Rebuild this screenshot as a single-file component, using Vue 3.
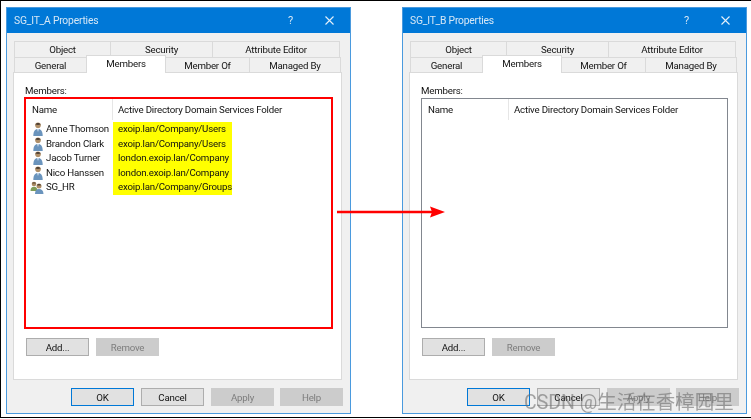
<template>
  <div class="shot">
    <section v-for="win in windows" :key="win.title" class="dialog">
      <header class="titlebar">
        <span class="title">{{ win.title }}</span>
        <span class="help">?</span>
        <svg class="close" width="9" height="9" viewBox="0 0 9 9">
          <path d="M.5 .5l8 8M8.500 .5l-8 8" stroke="#e4f0fa" stroke-width="1.100" fill="none" />
        </svg>
      </header>

      <div class="content">
        <div class="tabrow top">
          <span v-for="t in topTabs" :key="t" class="tab">{{ t }}</span>
        </div>
        <div class="tabrow bottom">
          <span v-for="t in bottomTabs" :key="t" :class="['tab', { active: t === 'Members' }]">{{ t }}</span>
        </div>

        <div class="panel">
          <div class="members-label">Members:</div>
          <div :class="['list', { flagged: win.members.length }]">
            <div class="list-head">
              <span class="col-name">Name</span>
              <span class="col-folder">Active Directory Domain Services Folder</span>
            </div>
            <div v-for="m in win.members" :key="m.name" class="row">
              <span class="cell-name">
                <svg v-if="m.group" class="icon multi" width="14" height="13" viewBox="0 0 14 13">
                  <circle cx="4" cy="3" r="2.300" fill="#a98a62" />
                  <path d="M2 2.200c.8-1.400 3.200-1.400 4 0-1.300.4-2.700.4-4 0z" fill="#5a4a38" />
                  <path d="M.5 10c0-3 1.300-4.300 3.500-4.300S7.500 7 7.500 10z" fill="#7f9d58" />
                  <circle cx="9" cy="5" r="2.500" fill="#b08f68" />
                  <path d="M6.800 4.200c.9-1.500 3.500-1.500 4.400 0-1.400.4-3 .4-4.400 0z" fill="#4f4034" />
                  <path d="M5 13c0-3.400 1.500-5 4-5s4.500 1.600 4.500 5z" fill="#6a94bd" />
                </svg>
                <svg v-else class="icon" width="10" height="14" viewBox="0 0 10 14">
                  <circle cx="5" cy="3.200" r="2.800" fill="#b08f68" />
                  <path d="M2.300 2.500C3 .4 7 .4 7.700 2.500 6 3 4 3 2.300 2.500z" fill="#4f4034" />
                  <path d="M.3 14c0-4.400 1.600-7 4.700-7s4.700 2.600 4.700 7z" fill="#6a94bd" />
                  <path d="M4 6.800h2L5 10z" fill="#dce6ef" />
                </svg>
                {{ m.name }}
              </span>
              <span class="cell-folder">{{ m.folder }}</span>
            </div>
          </div>
          <div class="list-actions">
            <button class="btn">Add...</button>
            <button class="btn off">Remove</button>
          </div>
        </div>

        <div class="footer">
          <button class="btn primary">OK</button>
          <button class="btn">Cancel</button>
          <button class="btn off">Apply</button>
          <button class="btn off">Help</button>
        </div>
      </div>
    </section>

    <svg class="arrow" width="109" height="14" viewBox="0 0 109 14">
      <path d="M0 7h95" stroke="#f00" stroke-width="2.600" />
      <path d="M93 1.500l15 5.500-15 5.500 2-5.500z" fill="#f00" />
    </svg>
    <div class="watermark">CSDN @生活在香樟园里</div>
  </div>
</template>

<script setup>
const topTabs = ['Object', 'Security', 'Attribute Editor']
const bottomTabs = ['General', 'Members', 'Member Of', 'Managed By']

const windows = [
  {
    title: 'SG_IT_A Properties',
    members: [
      { name: 'Anne Thomson', folder: 'exoip.lan/Company/Users' },
      { name: 'Brandon Clark', folder: 'exoip.lan/Company/Users' },
      { name: 'Jacob Turner', folder: 'london.exoip.lan/Company' },
      { name: 'Nico Hanssen', folder: 'london.exoip.lan/Company' },
      { name: 'SG_HR', folder: 'exoip.lan/Company/Groups', group: true }
    ]
  },
  { title: 'SG_IT_B Properties', members: [] }
]
</script>

<style>
html, body { background: #fff; }
</style>

<style scoped>
.shot {
  position: relative;
  width: 751px;
  height: 418px;
  box-sizing: border-box;
  overflow: hidden;
  border-top: 1px solid #000;
  border-left: 1px solid #000;
  border-bottom: 1px solid #000;
  padding: 6px 4px 3px 5px;
  display: flex;
  justify-content: space-between;
  font-family: Roboto, "Noto Sans CJK SC", sans-serif;
  font-size: 9.7px;
  letter-spacing: -.2px;
  color: #111;
  background: #fff;
  filter: blur(.4px);
}

.dialog {
  width: 345px;
  box-sizing: border-box;
  border: 1px solid #4a9ade;
  display: flex;
  flex-direction: column;
  background: #f0f0f0;
}

.titlebar {
  height: 25px;
  flex: none;
  background: #0078d7;
  color: #d5e7f6;
  display: flex;
  align-items: center;
  padding: 0 16px 0 7px;
  font-size: 10.300px;
}
.title { flex: 1; }
.help { margin-right: 32px; font-size: 11px; }

.content {
  flex: 1;
  padding: 8px 8px 7px 6px;
  display: flex;
  flex-direction: column;
}

.tabrow { display: flex; height: 16px; flex: none; }
.tabrow.bottom { height: 15px; position: relative; z-index: 1; margin-bottom: -1px; }

.tab {
  box-sizing: border-box;
  border: 1px solid #dadada;
  border-bottom: 0;
  border-right-width: 0;
  background: #f0f0f0;
  display: flex;
  align-items: center;
  justify-content: center;
}
.tab:last-child { border-right-width: 1px; }
.top .tab:nth-child(1) { width: 96px; margin-left: 1px; }
.top .tab:nth-child(2) { width: 102px; }
.top .tab:nth-child(3) { width: 128px; }
.bottom .tab:nth-child(1) { width: 72px; margin-left: 1px; }
.bottom .tab:nth-child(2) { width: 80px; }
.bottom .tab:nth-child(3) { width: 84px; }
.bottom .tab:nth-child(4) { width: 92px; }
.tab.active {
  background: #fff;
  height: 18px;
  margin-top: -2px;
  padding-bottom: 3px;
  border-right-width: 1px;
  margin-right: -1px;
  position: relative;
}

.panel {
  flex: 1;
  box-sizing: border-box;
  background: #fff;
  border: 1px solid #dadada;
  margin-top: 1px;
  padding: 11px 9px 0 11px;
  display: flex;
  flex-direction: column;
}

.members-label { height: 14px; line-height: 13px; }

.list {
  flex: 1;
  box-sizing: border-box;
  border: 1px solid #82878f;
}
.list.flagged {
  outline: 2.500px solid #f00;
  outline-offset: -1.500px;
}

.list-head {
  height: 21px;
  display: flex;
  align-items: center;
  margin-bottom: 2px;
}
.col-name {
  width: 87px;
  height: 21px;
  line-height: 21px;
  box-sizing: border-box;
  padding-left: 6px;
  border-right: 1px solid #e6e6e6;
  flex: none;
}
.col-folder { padding-left: 5px; }

.row { display: flex; height: 14.600px; align-items: center; }
.cell-name {
  width: 87px;
  height: 14.600px;
  line-height: 14.600px;
  flex: none;
  display: flex;
  align-items: center;
  gap: 3px;
  padding-left: 7px;
  box-sizing: border-box;
  white-space: nowrap;
}
.icon { flex: none; }
.icon.multi { margin: 0 -1px 0 -3px; }
.cell-folder {
  background: #ff0;
  width: 119px;
  height: 14.600px;
  line-height: 14.600px;
  padding-left: 5px;
  box-sizing: border-box;
  white-space: nowrap;
}

.list-actions {
  display: flex;
  gap: 7px;
  padding: 10px 0 0 1px;
  height: 51px;
  box-sizing: border-box;
  flex: none;
}

.btn {
  width: 63px;
  height: 18px;
  padding: 0;
  box-sizing: border-box;
  border: 1px solid #adadad;
  background: #e1e1e1;
  color: #111;
  font: inherit;
  letter-spacing: inherit;
}
.btn.off { background: #cccccc; border-color: #cccccc; color: #7d7d7d; }
.btn.primary { border: 1px solid #0078d7; }

.footer {
  display: flex;
  justify-content: flex-end;
  gap: 7px;
  padding-top: 8px;
  margin-right: -1px;
  flex: none;
}
.footer .btn:last-child { margin-left: -1px; }

.arrow { position: absolute; left: 336px; top: 204px; }

.watermark {
  position: absolute;
  left: 523px;
  top: 385px;
  font-size: 19.500px;
  letter-spacing: 0;
  white-space: nowrap;
  color: rgba(110, 110, 110, .6);
}
</style>
